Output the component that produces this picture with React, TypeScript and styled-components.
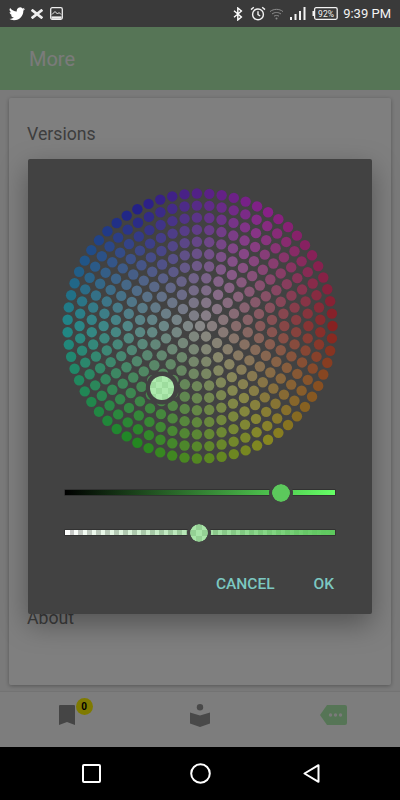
import React from 'react'
import styled, { createGlobalStyle } from 'styled-components'

const GlobalStyle = createGlobalStyle`
  html, body {
    margin: 0;
    padding: 0;
    background: #000;
    font-family: Roboto, "Liberation Sans", sans-serif;
  }
`

const CHECKER_A = '#9edc9e'
const CHECKER_B = '#aeeaae'

const Screen = styled.div`
  width: 400px;
  height: 800px;
  display: flex;
  flex-direction: column;
  overflow: hidden;
`

const StatusBar = styled.div`
  height: 27px;
  flex: none;
  background: #3a3a3a;
  display: flex;
  align-items: center;
  padding: 0 9px;
  color: #fff;
`

const StatusLeft = styled.div`
  display: flex;
  align-items: center;
  flex: 1;
`

const StatusRight = styled.div`
  display: flex;
  align-items: center;
`

const StatusIcon = styled.span<{ $gap?: number }>`
  display: flex;
  margin-left: ${p => p.$gap ?? 0}px;
`

const Clock = styled.span`
  font-size: 13px;
  margin-left: 5px;
  color: #f4f4f4;
`

const Main = styled.div`
  position: relative;
  flex: 1;
  min-height: 0;
  display: flex;
  flex-direction: column;
  background: #f5f5f5;
`

const Header = styled.div`
  height: 63px;
  flex: none;
  background: #acebac;
  display: flex;
  align-items: center;
  padding-left: 29px;
  font-size: 20px;
  color: #f6f6f6;
`

const Content = styled.div`
  flex: 1;
  min-height: 0;
  padding: 8px 9px 7px;
  display: flex;
`

const Card = styled.div`
  flex: 1;
  background: #fff;
  border-radius: 2px;
  box-shadow: 0 1px 4px rgba(0, 0, 0, 0.3);
  padding: 26px 18px 57px;
  display: flex;
  flex-direction: column;
  justify-content: space-between;
`

const CardRow = styled.div`
  font-size: 17.7px;
  line-height: 20px;
  color: #7c7c7c;
`

const TabBar = styled.div`
  height: 55px;
  flex: none;
  box-sizing: border-box;
  padding-bottom: 9px;
  display: flex;
  background: #fafafa;
  box-shadow: 0 -1px 1px rgba(0, 0, 0, 0.06);
`

const Tab = styled.div`
  flex: 1;
  display: flex;
  align-items: center;
  justify-content: center;
`

const BadgeWrap = styled.div`
  position: relative;
  display: flex;
`

const Badge = styled.span`
  position: absolute;
  left: 17px;
  top: -7px;
  width: 17px;
  height: 17px;
  border-radius: 50%;
  background: #fff500;
  color: #000;
  font-size: 10px;
  font-weight: 700;
  display: flex;
  align-items: center;
  justify-content: center;
`

const Scrim = styled.div`
  position: absolute;
  inset: 0;
  padding-bottom: 1px;
  background: rgba(0, 0, 0, 0.5);
  display: flex;
  align-items: center;
  justify-content: center;
`

const Dialog = styled.div`
  width: 344px;
  height: 455px;
  background: #424242;
  border-radius: 2px;
  box-shadow: 0 10px 28px rgba(0, 0, 0, 0.35);
  display: flex;
  flex-direction: column;
  align-items: center;
  padding-top: 25px;
  box-sizing: border-box;
`

const WheelBox = styled.div`
  position: relative;
  width: 284px;
  height: 284px;
  flex: none;
`

const Swatch = styled.span`
  position: absolute;
  left: 92px;
  top: 192px;
  width: 24px;
  height: 24px;
  border-radius: 50%;
  background-image: conic-gradient(${CHECKER_A} 25%, ${CHECKER_B} 0 50%, ${CHECKER_A} 0 75%, ${CHECKER_B} 0);
  background-size: 12px 12px;
`

const SliderStack = styled.div`
  margin-top: 22px;
  width: 270px;
  display: flex;
  flex-direction: column;
  gap: 35px;
`

const Slider = styled.div`
  position: relative;
  height: 5px;
`

const Track = styled.div<{ $checker?: boolean }>`
  height: 5px;
  box-shadow: 0 0 0 0.5px #222;
  ${p =>
    p.$checker
      ? `background-image: linear-gradient(to right, rgba(92,200,92,0), #5cc85c), repeating-linear-gradient(to right, #fff 0 4.5px, #c8c8c8 4.5px 9px);`
      : 'background: linear-gradient(to right, #000, #66ff66);'}
`

const Thumb = styled.span<{ $checker?: boolean }>`
  position: absolute;
  top: -6.5px;
  width: 18px;
  height: 18px;
  margin-left: -9px;
  border-radius: 50%;
  outline: 3px solid #424242;
  ${p =>
    p.$checker
      ? `background-image: conic-gradient(#94d094 25%, #a8e4a8 0 50%, #94d094 0 75%, #a8e4a8 0);
         background-size: 12px 12px;`
      : 'background: #5cc85c;'}
`

const Actions = styled.div`
  width: 100%;
  box-sizing: border-box;
  margin-top: 40px;
  padding-right: 38px;
  display: flex;
  justify-content: flex-end;
  gap: 39px;
`

const ActionButton = styled.span`
  font-size: 15.5px;
  line-height: 18px;
  font-weight: 500;
  color: #7cc8c1;
`

const NavBar = styled.div`
  height: 53px;
  flex: none;
  background: #000;
  display: grid;
  grid-template-columns: 110px 108px 114px;
  padding-left: 36px;
  align-items: center;
  justify-items: center;
`

// same layout as the colour picker's simple wheel renderer
const hsvToRgb = (h: number, s: number, v: number) => {
  const f = (n: number) => {
    const k = (n + h / 60) % 6
    return Math.round(255 * (v - v * s * Math.max(0, Math.min(k, 4 - k, 1))))
  }
  return `rgb(${f(5)},${f(3)},${f(1)})`
}

const buildDots = () => {
  const density = 12
  const maxRadius = 132.5
  const cSize = maxRadius / (density - 1) / 2
  const dots: { x: number; y: number; fill: string }[] = []
  for (let i = 0; i < density; i++) {
    const radius = (maxRadius * i) / (density - 1)
    const total = i === 0 ? 1 : Math.max(1, Math.floor((0.975 * Math.PI) / Math.asin(cSize / radius) + 0.5))
    for (let j = 0; j < total; j++) {
      const angle = (Math.PI * 2 * j) / total + (Math.PI / total) * ((i + 1) % 2)
      dots.push({
        x: 142 + radius * Math.cos(angle),
        y: 142 + radius * Math.sin(angle),
        fill: hsvToRgb(((angle * 180) / Math.PI) % 360, radius / maxRadius, 0.8),
      })
    }
  }
  return dots
}

const Wheel = () => (
  <WheelBox>
    <svg width="284" height="284" viewBox="0 0 284 284">
      {buildDots().map((d, i) => (
        <circle key={i} cx={d.x} cy={d.y} r={5.2} fill={d.fill} fillOpacity={0.5} />
      ))}
      <circle cx="104.3" cy="204" r="16.5" fill="#424242" />
    </svg>
    <Swatch />
  </WheelBox>
)

const Twitter = () => (
  <svg width="16" height="14" viewBox="0 0 24 20" fill="#fff">
    <path d="M24 2.4a9.6 9.6 0 0 1-2.8.8A5 5 0 0 0 23.3.5a9.8 9.8 0 0 1-3.1 1.2 4.9 4.9 0 0 0-8.4 4.5A14 14 0 0 1 1.7.9a4.9 4.9 0 0 0 1.5 6.6 4.9 4.9 0 0 1-2.2-.6c0 2.4 1.7 4.4 4 4.9a5 5 0 0 1-2.2.1 4.9 4.9 0 0 0 4.6 3.4A9.9 9.9 0 0 1 0 17.3 14 14 0 0 0 7.5 19.5c9.1 0 14-7.5 14-14v-.6A10 10 0 0 0 24 2.4z" />
  </svg>
)

const Cross = () => (
  <svg width="12" height="10" viewBox="0 0 12 10" fill="none" stroke="#eee" strokeWidth="2.8">
    <path d="M0.6 0.8 11.4 9.2M11.4 0.8 0.6 9.2" />
  </svg>
)

const ImageNote = () => (
  <svg width="13" height="13" viewBox="0 0 13 13" fill="none" stroke="#eee">
    <rect x="0.7" y="0.7" width="11.6" height="11.6" rx="1.5" strokeWidth="1.3" />
    <path d="M2 7.5 5 4.5l2.5 2.5L9 5.5l2 2" strokeWidth="1" />
    <rect x="1.5" y="9.4" width="10" height="2.4" fill="#eee" stroke="none" />
  </svg>
)

const Bluetooth = () => (
  <svg width="10" height="14" viewBox="0 0 10 14" fill="none" stroke="#fff" strokeWidth="1.4">
    <path d="M1 3.8 8.4 10 4.8 13V1l3.6 3L1 10.2" />
  </svg>
)

const Alarm = () => (
  <svg width="16" height="15" viewBox="0 0 16 15" fill="none" stroke="#f2f2f2" strokeWidth="1.4">
    <circle cx="8" cy="8.4" r="5.4" />
    <path d="M8 5.2v3.4l2.2 1.4M1 3.6 3.8 1.2M15 3.6 12.2 1.2" />
  </svg>
)

const Wifi = () => (
  <svg width="15" height="12" viewBox="0 0 15 12" fill="none" stroke="#8c8c8c" strokeWidth="1">
    <path d="M1 3.6C4.6.6 10.4.6 14 3.6M3 6c2.6-2 6.4-2 9 0M5 8.2c1.4-1 3.6-1 5 0" />
    <circle cx="7.5" cy="10.4" r="1" fill="#8c8c8c" stroke="none" />
  </svg>
)

const Signal = () => (
  <svg width="16" height="13" viewBox="0 0 16 13" fill="#f2f2f2">
    <rect x="0" y="10" width="2" height="3" />
    <rect x="4.5" y="7" width="2" height="6" />
    <rect x="9" y="4" width="2" height="9" />
    <rect x="13.5" y="0" width="2" height="13" />
  </svg>
)

const Battery = () => (
  <svg width="26" height="13" viewBox="0 0 26 13">
    <rect x="2.6" y="0.7" width="22.6" height="11.6" rx="1.5" fill="none" stroke="#f2f2f2" strokeWidth="1.3" />
    <rect x="0.5" y="4" width="2" height="5" fill="#f2f2f2" />
    <text x="14" y="9.7" fontSize="8.5" fill="#f2f2f2" textAnchor="middle" fontFamily="Roboto, sans-serif">
      92%
    </text>
  </svg>
)

const Bookmark = () => (
  <svg width="16" height="20" viewBox="0 0 16 20" fill="#8a8a8a">
    <path d="M0 1a1 1 0 0 1 1-1h14a1 1 0 0 1 1 1v19l-8-3-8 3z" />
  </svg>
)

const Reader = () => (
  <svg width="20" height="23" viewBox="0 0 20 23" fill="#929292">
    <circle cx="10" cy="3.2" r="3.2" />
    <path d="M0 8.6 10 11.4l10-2.8v11L10 23 0 19.6z" />
  </svg>
)

const MoreTag = () => (
  <svg width="27" height="20" viewBox="0 0 27 20">
    <path d="M7 0h18a2 2 0 0 1 2 2v16a2 2 0 0 1-2 2H7L0 10z" fill="#acebac" />
    <g fill="#f5f5f5">
      <circle cx="10.5" cy="10" r="1.7" />
      <circle cx="15.5" cy="10" r="1.7" />
      <circle cx="20.5" cy="10" r="1.7" />
    </g>
  </svg>
)

const NavSquare = () => (
  <svg width="19" height="19" viewBox="0 0 19 19" fill="none" stroke="#fff" strokeWidth="2">
    <rect x="1" y="1" width="17" height="17" rx="1" />
  </svg>
)

const NavCircle = () => (
  <svg width="21" height="21" viewBox="0 0 21 21" fill="none" stroke="#fff" strokeWidth="2">
    <circle cx="10.5" cy="10.5" r="9.3" />
  </svg>
)

const NavBack = () => (
  <svg width="17" height="19" viewBox="0 0 17 19" fill="none" stroke="#fff" strokeWidth="2" strokeLinejoin="round">
    <path d="M15.5 1.2v16.6L1.5 9.5z" />
  </svg>
)

export default function App() {
  return (
    <>
      <GlobalStyle />
      <Screen>
        <StatusBar>
          <StatusLeft>
            <StatusIcon>
              <Twitter />
            </StatusIcon>
            <StatusIcon $gap={6}>
              <Cross />
            </StatusIcon>
            <StatusIcon $gap={7}>
              <ImageNote />
            </StatusIcon>
          </StatusLeft>
          <StatusRight>
            <StatusIcon>
              <Bluetooth />
            </StatusIcon>
            <StatusIcon $gap={7}>
              <Alarm />
            </StatusIcon>
            <StatusIcon $gap={3}>
              <Wifi />
            </StatusIcon>
            <StatusIcon $gap={6}>
              <Signal />
            </StatusIcon>
            <StatusIcon $gap={6}>
              <Battery />
            </StatusIcon>
            <Clock>9:39 PM</Clock>
          </StatusRight>
        </StatusBar>
        <Main>
          <Header>More</Header>
          <Content>
            <Card>
              <CardRow>Versions</CardRow>
              <CardRow>About</CardRow>
            </Card>
          </Content>
          <TabBar>
            <Tab>
              <BadgeWrap>
                <Bookmark />
                <Badge>0</Badge>
              </BadgeWrap>
            </Tab>
            <Tab>
              <Reader />
            </Tab>
            <Tab>
              <MoreTag />
            </Tab>
          </TabBar>
          <Scrim>
            <Dialog>
              <Wheel />
              <SliderStack>
                <Slider>
                  <Track />
                  <Thumb style={{ left: `${(216 / 270) * 100}%` }} />
                </Slider>
                <Slider>
                  <Track $checker />
                  <Thumb $checker style={{ left: `${(134 / 270) * 100}%` }} />
                </Slider>
              </SliderStack>
              <Actions>
                <ActionButton>CANCEL</ActionButton>
                <ActionButton>OK</ActionButton>
              </Actions>
            </Dialog>
          </Scrim>
        </Main>
        <NavBar>
          <NavSquare />
          <NavCircle />
          <NavBack />
        </NavBar>
      </Screen>
    </>
  )
}
